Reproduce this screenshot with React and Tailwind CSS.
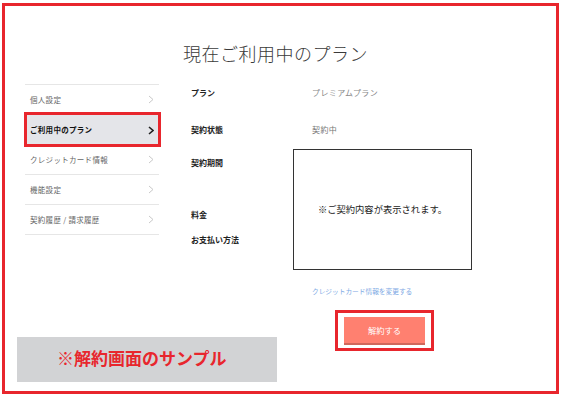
const menu = [
  { label: "個人設定" },
  { label: "ご利用中のプラン", active: true },
  { label: "クレジットカード情報" },
  { label: "機能設定" },
  { label: "契約履歴 / 請求履歴" },
];

function Chevron({ active }) {
  return (
    <svg width="6" height="9" viewBox="0 0 6 9" className="shrink-0">
      <polyline
        points="1,1 5,4.5 1,8"
        fill="none"
        stroke={active ? "#222" : "#c9c9c9"}
        strokeWidth={active ? 1.6 : 1}
      />
    </svg>
  );
}

export default function App() {
  return (
    <div
      className="w-[562px] h-[396px] bg-white pl-[2px] pr-[3px] pt-[3px] pb-[2px] overflow-hidden"
      style={{ fontFamily: '"Noto Sans CJK JP", "Noto Sans", sans-serif' }}
    >
      <div className="h-[391px] border-[3px] border-[#e8262d] flex flex-col">
        {/* title */}
        <h1 className="ml-[178px] mt-[35px] text-[18px] leading-[24px] font-light text-[#3a3a3a] tracking-[0.5px]">
          現在ご利用中のプラン
        </h1>

        <div className="flex mt-[19px] pl-[20px]">
          {/* sidebar */}
          <div className="w-[134px] flex flex-col">
            <div className="border-t border-[#e6e6e6]">
              {menu.map((m) => (
                <div
                  key={m.label}
                  className={
                    m.active
                      ? "relative h-[30px] flex items-center justify-between pl-[5px] pr-[5px] bg-[#e4e5e9] text-[#111] font-bold"
                      : "h-[30px] flex items-center justify-between pl-[5px] pr-[5px] border-b border-[#e6e6e6] text-[#666]"
                  }
                >
                  <span className="text-[7.5px] tracking-[0.3px]">{m.label}</span>
                  <Chevron active={m.active} />
                  {m.active && (
                    <div className="absolute -left-[1px] -right-[2px] -top-[3px] -bottom-[2px] border-[3px] border-[#e8262d]" />
                  )}
                </div>
              ))}
            </div>
            <div className="-ml-[8px] mt-[102px] w-[260px] h-[45px] bg-[#d2d3d5] flex items-center pl-[40px] pb-[4px]">
              <span className="text-[17px] font-bold text-[#e8262d] whitespace-nowrap">
                ※解約画面のサンプル
              </span>
            </div>
          </div>

          {/* content */}
          <div className="ml-[32px] flex">
            <div className="w-[102px] flex flex-col text-[8px] font-bold text-[#222]">
              <div className="mt-[3px] h-[12px] leading-[12px]">プラン</div>
              <div className="mt-[25px] h-[12px] leading-[12px]">契約状態</div>
              <div className="mt-[21px] h-[12px] leading-[12px]">契約期間</div>
              <div className="mt-[40px] h-[12px] leading-[12px]">料金</div>
              <div className="mt-[13px] h-[12px] leading-[12px]">お支払い方法</div>
            </div>

            <div className="flex flex-col">
              <div className="mt-[3px] h-[12px] leading-[12px] pl-[19px] text-[8px] text-[#888] tracking-[0.4px]">
                プレミアムプラン
              </div>
              <div className="mt-[25px] h-[12px] leading-[12px] pl-[19px] text-[8px] text-[#777] tracking-[0.4px]">
                契約中
              </div>
              <div className="mt-[13px] w-[179px] h-[121px] border-[1.5px] border-[#333] flex items-center justify-center">
                <span className="text-[9.3px] text-[#222]">※ご契約内容が表示されます。</span>
              </div>
              <div className="mt-[16px] pl-[19px] text-[6.7px] leading-[10px] text-[#7ea9e4]">
                クレジットカード情報を変更する
              </div>
              <div className="mt-[14px] ml-[42px] w-[99px] border-[3px] border-[#e8262d] px-[6px] pt-[4px] pb-[5px]">
                <div className="w-[81px] h-[26px] bg-[#ff8070] shadow-[0_2px_0_#d0675b] flex items-center justify-center text-[8.3px] text-white">
                  解約する
                </div>
              </div>
            </div>
          </div>
        </div>
      </div>
    </div>
  );
}
